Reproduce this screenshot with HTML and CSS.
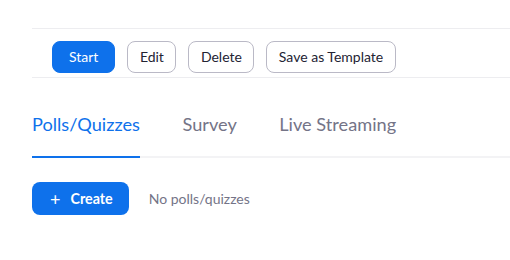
FILE: index.html
```html
<!DOCTYPE html>
<html lang="en">
  <head>
    <meta charset="UTF-8" />
    <meta name="viewport" content="width=device-width, initial-scale=1.0" />
    <title>Meeting</title>
    <link rel="stylesheet" href="styles.css">
  </head>
  <body>
    <main>
      <div class="topRow"></div>
      <div class="actions">
        <button class="btn primary">Start</button>
        <button class="btn">Edit</button>
        <button class="btn">Delete</button>
        <button class="btn">Save as Template</button>
      </div>
      <nav class="tabs">
        <span class="tab active">Polls/Quizzes</span>
        <span class="tab">Survey</span>
        <span class="tab">Live Streaming</span>
      </nav>
      <section class="pollRow">
        <button class="createButton"><span class="plus">+</span>Create</button>
        <span class="empty">No polls/quizzes</span>
      </section>
    </main>
  </body>
</html>
```

FILE: styles.css
```css
:root {
  --blue: #0e71eb;
  --dark: #232333;
  --gray: #747487;
  --line: #ededf0;
  --border: #bab9c6;
}
* {
  margin: 0;
  padding: 0;
  box-sizing: border-box;
  font-family: Lato, "Liberation Sans", Arial, sans-serif;
}
body {
  background-color: #ffffff;
}
main {
  padding-left: 32px;
}
.topRow {
  height: 29px;
  border-bottom: 1px solid var(--line);
}
.actions {
  display: flex;
  gap: 12px;
  padding: 12px 20px 4px;
  border-bottom: 1px solid var(--line);
}
.btn {
  height: 32px;
  padding: 0 11.5px;
  border: 1px solid var(--border);
  border-radius: 8px;
  background-color: #ffffff;
  color: var(--dark);
  font-size: 14px;
  line-height: 30px;
}
.primary {
  padding: 0 16px;
  border-color: var(--blue);
  background-color: var(--blue);
  color: #ffffff;
}
.tabs {
  display: flex;
  gap: 42.5px;
  padding-top: 35px;
  border-bottom: 2px solid #f3f3f5;
}
.tab {
  font-size: 18.2px;
  line-height: 22px;
  color: var(--gray);
  padding: 0 0 21px;
  margin-bottom: -2px;
  border-bottom: 2px solid transparent;
}
.tab.active {
  color: var(--blue);
  border-bottom-color: var(--blue);
}
.pollRow {
  display: flex;
  align-items: center;
  gap: 20px;
  margin-top: 24px;
}
.createButton {
  display: flex;
  align-items: center;
  height: 33px;
  padding: 0 16px 0 18px;
  border: none;
  border-radius: 8px;
  background-color: var(--blue);
  color: #ffffff;
  font-size: 14.3px;
  font-weight: bold;
}
.plus {
  font-size: 18px;
  font-weight: normal;
  margin-right: 10px;
  line-height: 1;
}
.empty {
  font-size: 14px;
  color: var(--gray);
}
```
